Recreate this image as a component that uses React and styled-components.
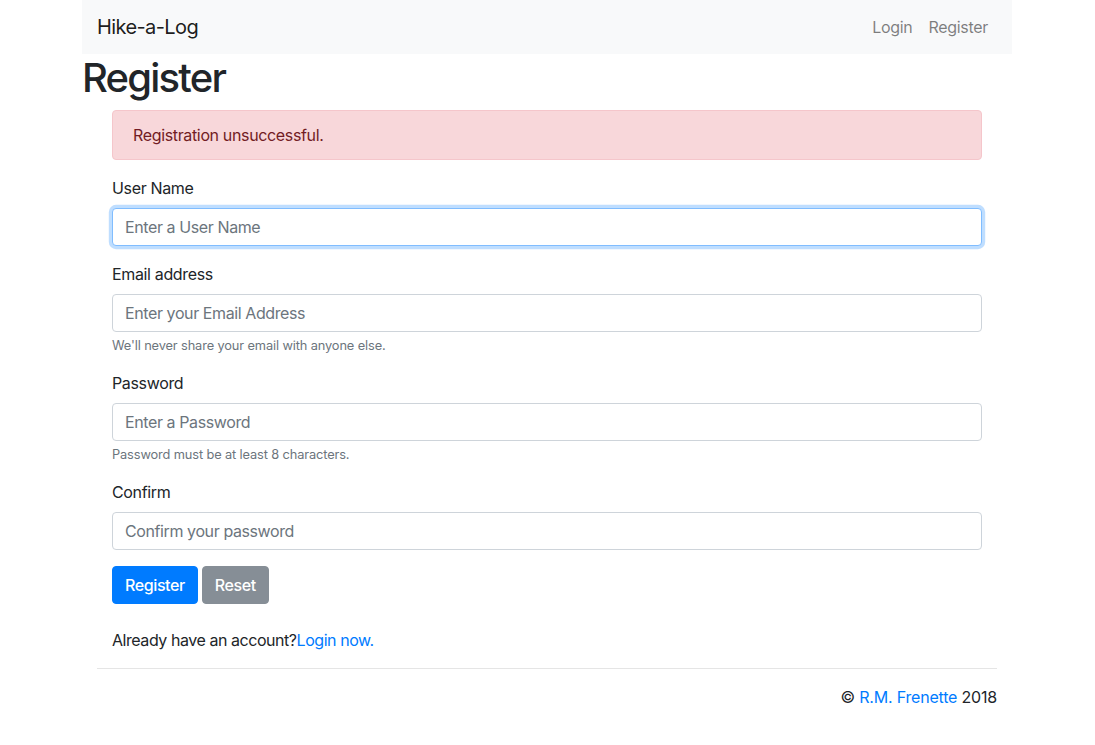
import React from "react";
import styled, { createGlobalStyle } from "styled-components";

const Global = createGlobalStyle`
  * { box-sizing: border-box; }
  html, body { margin: 0; padding: 0; }
  body {
    font-family: Inter, "Noto Sans", "Liberation Sans", sans-serif;
    font-size: 16px;
    line-height: 1.5;
    color: #212529;
    background: #fff;
  }
  input::placeholder { color: #6c757d; opacity: 1; }
`;

const Container = styled.div`
  width: 960px;
  margin: 0 0 0 67px;
  padding: 0 15px;
`;

const Navbar = styled.nav`
  display: flex;
  align-items: center;
  justify-content: space-between;
  height: 54px;
  padding: 0 16px 1px 15px;
  background: #f8f9fa;
`;

const Brand = styled.a`
  font-size: 20px;
  line-height: 30px;
  color: rgba(0, 0, 0, 0.9);
  text-decoration: none;
  letter-spacing: -0.6px;
`;

const NavLinks = styled.div`
  display: flex;
`;

const NavLink = styled.a`
  padding: 8px;
  color: rgba(0, 0, 0, 0.5);
  text-decoration: none;
  letter-spacing: -0.3px;
`;

const Title = styled.h1`
  margin: 0 0 8px;
  font-size: 40px;
  font-weight: 500;
  line-height: 48px;
  letter-spacing: -1.8px;
`;

const Inner = styled.div`
  padding: 0 15px;
`;

const FormWrap = styled.div`
  padding: 0 15px;
`;

const Alert = styled.div`
  padding: 12px 20px;
  margin-bottom: 16px;
  border: 1px solid #f5c6cb;
  border-radius: 4px;
  background: #f8d7da;
  color: #721c24;
  letter-spacing: -0.35px;
`;

const Group = styled.div`
  margin-bottom: 16px;
`;

const Label = styled.label`
  display: block;
  margin-bottom: 8px;
  letter-spacing: -0.35px;
`;

const Input = styled.input`
  display: block;
  width: 100%;
  height: 38px;
  padding: 6px 12px;
  font: inherit;
  letter-spacing: -0.4px;
  color: #495057;
  background: #fff;
  border: 1px solid ${(p) => (p.$focus ? "#80bdff" : "#ced4da")};
  border-radius: 4px;
  outline: none;
  box-shadow: ${(p) => (p.$focus ? "0 0 0 3.2px rgba(0,123,255,.25)" : "none")};
`;

const Help = styled.small`
  display: block;
  margin-top: 4px;
  font-size: 12.8px;
  line-height: 19.2px;
  color: #6c757d;
  letter-spacing: -0.12px;
`;

const Buttons = styled.div`
  display: flex;
  gap: 4px;
  margin-bottom: 24px;
`;

const Button = styled.button`
  height: 38px;
  padding: 6px 12px;
  font: inherit;
  font-weight: 500;
  letter-spacing: -0.4px;
  color: #fff;
  background: ${(p) => (p.$variant === "secondary" ? "#868e96" : "#007bff")};
  border: 1px solid ${(p) => (p.$variant === "secondary" ? "#868e96" : "#007bff")};
  border-radius: 4px;
`;

const Para = styled.p`
  margin: 0 0 16px;
  letter-spacing: -0.45px;
`;

const Link = styled.a`
  color: #007bff;
  text-decoration: none;
`;

const Rule = styled.hr`
  margin: 0 0 16px;
  border: 0;
  border-top: 1px solid rgba(0, 0, 0, 0.1);
`;

const Footer = styled.footer`
  text-align: right;
  letter-spacing: -0.2px;
`;

export default function App() {
  return (
    <>
      <Global />
      <Container>
        <Navbar>
          <Brand href="#">Hike-a-Log</Brand>
          <NavLinks>
            <NavLink href="#">Login</NavLink>
            <NavLink href="#">Register</NavLink>
          </NavLinks>
        </Navbar>
        <Title>Register</Title>
        <Inner>
          <FormWrap>
            <Alert>Registration unsuccessful.</Alert>
            <form onSubmit={(e) => e.preventDefault()}>
              <Group>
                <Label>User Name</Label>
                <Input $focus placeholder="Enter a User Name" />
              </Group>
              <Group>
                <Label>Email address</Label>
                <Input type="email" placeholder="Enter your Email Address" />
                <Help>We'll never share your email with anyone else.</Help>
              </Group>
              <Group>
                <Label>Password</Label>
                <Input type="password" placeholder="Enter a Password" />
                <Help>Password must be at least 8 characters.</Help>
              </Group>
              <Group>
                <Label>Confirm</Label>
                <Input type="password" placeholder="Confirm your password" />
              </Group>
              <Buttons>
                <Button type="submit">Register</Button>
                <Button type="reset" $variant="secondary">Reset</Button>
              </Buttons>
            </form>
            <Para>
              Already have an account?<Link href="#">Login now.</Link>
            </Para>
          </FormWrap>
          <Rule />
          <Footer>
            © <Link href="#">R.M. Frenette</Link> 2018
          </Footer>
        </Inner>
      </Container>
    </>
  );
}
